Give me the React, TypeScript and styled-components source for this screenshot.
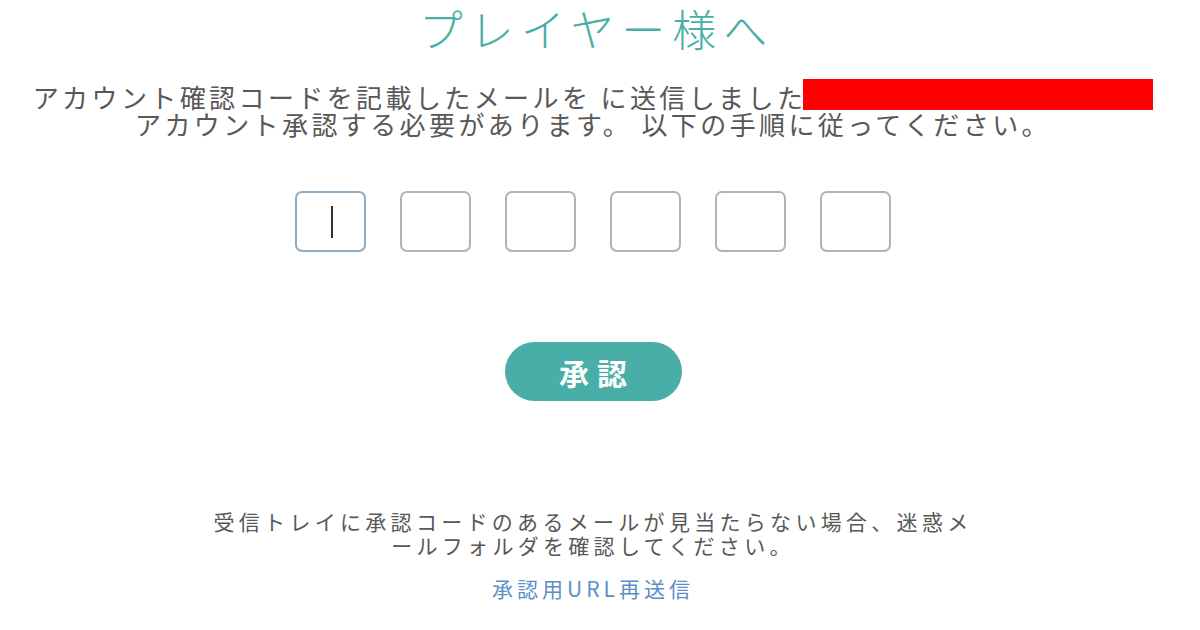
import styled, { createGlobalStyle } from "styled-components";

const GlobalStyle = createGlobalStyle`
    body {
        margin: 0;
        background: #ffffff;
        font-family: "Noto Sans CJK JP", "Noto Sans", sans-serif;
        color: #555555;
    }
`;

const Page = styled.div`
    width: 1186px;
    height: 630px;
    display: flex;
    flex-direction: column;
    align-items: center;
`;

const Title = styled.h1`
    margin: 0;
    padding: 2px 0 0 7px;
    font-size: 44px;
    line-height: 52px;
    font-weight: 300;
    letter-spacing: 7px;
    color: #4aaea8;
`;

const Message = styled.p`
    margin: 28px 0 0;
    font-size: 26px;
    line-height: 27px;
    letter-spacing: 3.4px;
    text-align: center;
    color: #585858;
`;

const Redacted = styled.span`
    display: inline-block;
    width: 350px;
    height: 31px;
    margin: -3px 0 -2px -3px;
    vertical-align: 0px;
    background: #ff0000;
`;

const CodeRow = styled.div`
    margin-top: 54px;
    display: flex;
    gap: 34px;
`;

const CodeBox = styled.div<{ $active?: boolean }>`
    width: 71px;
    height: 61px;
    box-sizing: border-box;
    border: 2px solid ${(p) => (p.$active ? "#8fabc9" : "#b3b3b3")};
    border-radius: 7px;
    display: flex;
    align-items: center;
    justify-content: center;
`;

const Caret = styled.span`
    width: 2px;
    height: 32px;
    background: #333333;
    margin-left: 3px;
`;

const ApproveButton = styled.button`
    margin-top: 90px;
    width: 177px;
    height: 59px;
    border: none;
    border-radius: 30px;
    background: #4aaea8;
    color: #ffffff;
    font-family: "Noto Sans CJK JP", sans-serif;
    font-size: 30px;
    font-weight: 700;
    letter-spacing: 8px;
    padding: 0 0 0 8px;
    cursor: pointer;
`;

const Note = styled.p`
    margin: 108px 0 0;
    max-width: 772px;
    font-size: 21px;
    line-height: 24px;
    letter-spacing: 4.3px;
    text-align: center;
    color: #585858;
`;

const ResendLink = styled.a`
    margin-top: 19px;
    font-size: 21px;
    line-height: 24px;
    letter-spacing: 4px;
    color: #5b8fc7;
    text-decoration: none;
    cursor: pointer;
`;

const App = () => {
    return (
        <>
            <GlobalStyle />
            <Page>
                <Title>プレイヤー様へ</Title>

                <Message>
                    アカウント確認コードを記載したメールを に送信しました
                    <Redacted />
                    <br />
                    アカウント承認する必要があります。 以下の手順に従ってください。
                </Message>

                <CodeRow>
                    <CodeBox $active>
                        <Caret />
                    </CodeBox>
                    <CodeBox />
                    <CodeBox />
                    <CodeBox />
                    <CodeBox />
                    <CodeBox />
                </CodeRow>

                <ApproveButton>承認</ApproveButton>

                <Note>
                    受信トレイに承認コードのあるメールが見当たらない場合、迷惑メールフォルダを確認してください。
                </Note>

                <ResendLink>承認用URL再送信</ResendLink>
            </Page>
        </>
    );
};

export default App;
